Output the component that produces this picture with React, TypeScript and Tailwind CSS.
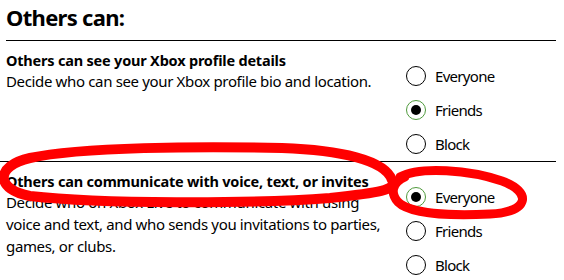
import React, { useState } from 'react';

type Choice = 'Everyone' | 'Friends' | 'Block';
const choices: Choice[] = ['Everyone', 'Friends', 'Block'];

const Radio: React.FC<{ label: Choice; checked: boolean; onPick: () => void }> = ({ label, checked, onPick }) => (
  <button onClick={onPick} className="flex h-[34px] items-center gap-[9px] text-left">
    <span
      className={`flex h-[20px] w-[20px] items-center justify-center rounded-full ${
        checked ? 'border border-[#4f9a3c]' : 'border-[1.5px] border-black'
      }`}
    >
      {checked && <span className="h-[10px] w-[10px] rounded-full bg-black" />}
    </span>
    <span className="text-[15px] leading-[20px] tracking-[-0.7px] text-black">{label}</span>
  </button>
);

const SettingRow: React.FC<{
  title: string;
  lines: string[];
  initial: Choice;
  last?: boolean;
}> = ({ title, lines, initial, last }) => {
  const [value, setValue] = useState<Choice>(initial);
  return (
    <div className={`flex ${last ? '' : 'border-b border-black'}`}>
      <div className="w-[406px] pl-[6px] pt-[9px]">
        <div className="text-[14.5px] font-bold leading-[20px] tracking-[-0.2px] text-black">{title}</div>
        {lines.map((l) => (
          <div key={l} className="text-[15px] leading-[22px] tracking-[-0.35px] text-black">
            {l}
          </div>
        ))}
      </div>
      <div className="flex flex-col pt-[18px]">
        {choices.map((c) => (
          <Radio key={c} label={c} checked={value === c} onPick={() => setValue(c)} />
        ))}
      </div>
    </div>
  );
};

const App: React.FC = () => {
  return (
    <div className="relative h-[280px] w-[564px] overflow-hidden bg-white font-['Noto_Sans',sans-serif]">
      <div className="w-[556px] pl-[6px]">
        <h1 className="border-b border-black pb-[8px] pt-[2px] text-[22px] font-bold leading-[30px] tracking-[-0.7px] text-black">
          Others can:
        </h1>
      </div>
      <div className="w-[556px]">
        <SettingRow
          title="Others can see your Xbox profile details"
          lines={['Decide who can see your Xbox profile bio and location.']}
          initial="Friends"
        />
        <SettingRow
          title="Others can communicate with voice, text, or invites"
          lines={[
            'Decide who on Xbox Live to communicate with using',
            'voice and text, and who sends you invitations to parties,',
            'games, or clubs.',
          ]}
          initial="Everyone"
          last
        />
      </div>

      {/* hand-drawn red markup */}
      <svg className="pointer-events-none absolute inset-0" width="564" height="280" viewBox="0 0 564 280" fill="none">
        <path
          d="M392 180 C385 160 340 150 282 148 C200 146 80 147 30 158 C-6 166 -4 190 30 196 C100 204 250 204 330 198 C378 193 398 190 392 180"
          stroke="#ff0000"
          strokeWidth="10"
          strokeLinecap="round"
        />
        <path
          d="M400 177 C420 166 470 170 502 181 C532 192 530 212 490 214 C450 216 410 214 398 202 C390 193 392 183 405 177"
          stroke="#ff0000"
          strokeWidth="9"
          strokeLinecap="round"
        />
      </svg>
    </div>
  );
};

export default App;
